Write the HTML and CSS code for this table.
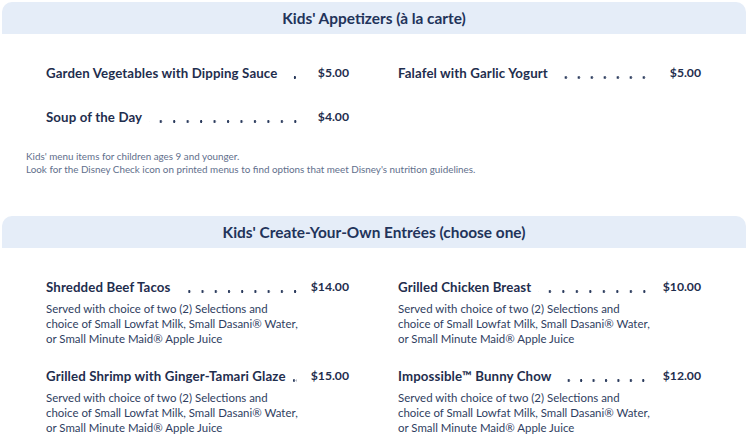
FILE: index.html
```html
<!DOCTYPE html>
<html lang="en">
<head>
<meta charset="utf-8">
<title>Kids' Menu</title>
<link rel="stylesheet" href="styles.css">
</head>
<body>
<main class="menu">
  <section class="section">
    <h2 class="section-title">Kids' Appetizers (à la carte)</h2>
    <div class="items items-simple">
      <div class="item">
        <div class="item-head"><span class="name">Garden Vegetables with Dipping Sauce</span><span class="leader"></span><span class="price">$5.00</span></div>
      </div>
      <div class="item">
        <div class="item-head"><span class="name">Falafel with Garlic Yogurt</span><span class="leader"></span><span class="price">$5.00</span></div>
      </div>
      <div class="item">
        <div class="item-head"><span class="name">Soup of the Day</span><span class="leader"></span><span class="price">$4.00</span></div>
      </div>
    </div>
    <p class="note">Kids' menu items for children ages 9 and younger.<br>Look for the Disney Check icon on printed menus to find options that meet Disney's nutrition guidelines.</p>
  </section>
  <section class="section section-entrees">
    <h2 class="section-title">Kids' Create-Your-Own Entrées (choose one)</h2>
    <div class="items items-desc">
      <div class="item">
        <div class="item-head"><span class="name">Shredded Beef Tacos</span><span class="leader"></span><span class="price">$14.00</span></div>
        <p class="desc">Served with choice of two (2) Selections and<br>choice of Small Lowfat Milk, Small Dasani® Water,<br>or Small Minute Maid® Apple Juice</p>
      </div>
      <div class="item">
        <div class="item-head"><span class="name">Grilled Chicken Breast</span><span class="leader"></span><span class="price">$10.00</span></div>
        <p class="desc">Served with choice of two (2) Selections and<br>choice of Small Lowfat Milk, Small Dasani® Water,<br>or Small Minute Maid® Apple Juice</p>
      </div>
      <div class="item">
        <div class="item-head"><span class="name">Grilled Shrimp with Ginger-Tamari Glaze</span><span class="leader"></span><span class="price">$15.00</span></div>
        <p class="desc">Served with choice of two (2) Selections and<br>choice of Small Lowfat Milk, Small Dasani® Water,<br>or Small Minute Maid® Apple Juice</p>
      </div>
      <div class="item">
        <div class="item-head"><span class="name">Impossible™ Bunny Chow</span><span class="leader"></span><span class="price">$12.00</span></div>
        <p class="desc">Served with choice of two (2) Selections and<br>choice of Small Lowfat Milk, Small Dasani® Water,<br>or Small Minute Maid® Apple Juice</p>
      </div>
    </div>
  </section>
</main>
</body>
</html>
```

FILE: styles.css
```css
* { box-sizing: border-box; }
html, body { margin: 0; padding: 0; background: #ffffff; }
body {
  font-family: "Lato", "Noto Sans", sans-serif;
  color: #1f2e4e;
  overflow: hidden;
}
.menu {
  padding: 2px 2px 0 2px;
}
.section-title {
  margin: 0;
  height: 32px;
  line-height: 32px;
  background: #e5edf8;
  border-radius: 10px 10px 0 0;
  text-align: center;
  font-size: 15.4px;
  font-weight: 700;
  color: #22335a;
}
.section-entrees {
  margin-top: 40px;
}
.items {
  display: grid;
  grid-template-columns: 303px 303px;
  column-gap: 49px;
  padding: 29px 0 0 44px;
}
.items-simple { row-gap: 24px; }
.items-desc { row-gap: 20px; }
.item-head {
  display: flex;
  align-items: stretch;
  height: 20px;
  line-height: 20px;
  font-weight: 700;
  white-space: nowrap;
}
.name {
  flex: none;
  font-size: 13.25px;
  letter-spacing: 0.12px;
  color: #1f2e4e;
}
.leader {
  flex: 1 1 0;
  margin: 0 2px 0 7px;
  min-width: 0;
  background-image: radial-gradient(circle at calc(100% - 1.8px) 1.5px, #2a3a5c 1.1px, transparent 1.4px);
  background-size: 13.33px 3px;
  background-repeat: round no-repeat;
  background-position: right 0 top 13px;
}
.item:nth-child(even) .leader {
  margin-right: 5px;
}
.price {
  flex: none;
  width: 50px;
  text-align: right;
  font-size: 12.2px;
  color: #1f2e4e;
}
.desc {
  margin: 4px 0 0 0;
  font-size: 11.45px;
  line-height: 15px;
  color: #2f3e5f;
}
.note {
  margin: 23px 0 0 24px;
  font-size: 9.85px;
  line-height: 13px;
  color: #5f6f8c;
}
```
